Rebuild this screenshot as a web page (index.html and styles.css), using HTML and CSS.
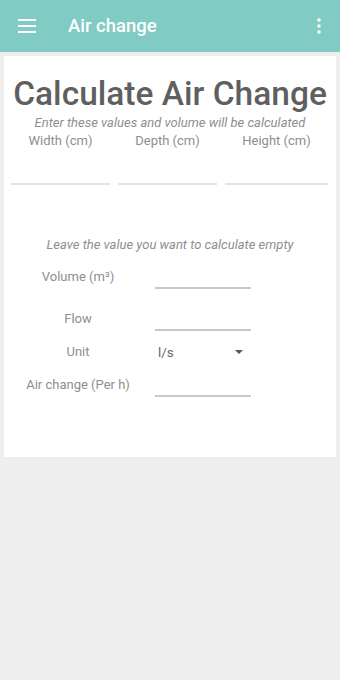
FILE: index.html
```html
<!DOCTYPE html>
<html lang="en">
<head>
  <meta charset="UTF-8">
  <meta name="viewport" content="width=device-width, initial-scale=1.0">
  <title>Air change</title>
  <link rel="stylesheet" href="styles.css">
</head>
<body>
  <header class="appbar">
    <svg class="menu-icon" width="18" height="14" viewBox="0 0 18 14">
      <rect x="0" y="0" width="18" height="2" fill="#fff"/>
      <rect x="0" y="6" width="18" height="2" fill="#fff"/>
      <rect x="0" y="12" width="18" height="2" fill="#fff"/>
    </svg>
    <div class="appbar-title">Air change</div>
    <svg class="more-icon" width="4" height="16" viewBox="0 0 4 16">
      <circle cx="2" cy="2" r="1.8" fill="#fff"/>
      <circle cx="2" cy="8" r="1.8" fill="#fff"/>
      <circle cx="2" cy="14" r="1.8" fill="#fff"/>
    </svg>
  </header>

  <main>
    <div class="card">
      <h1>Calculate Air Change</h1>
      <p class="hint">Enter these values and volume will be calculated</p>

      <div class="dims">
        <div class="dim">
          <label>Width (cm)</label>
          <input type="text">
        </div>
        <div class="dim">
          <label>Depth (cm)</label>
          <input type="text">
        </div>
        <div class="dim">
          <label>Height (cm)</label>
          <input type="text">
        </div>
      </div>

      <p class="hint note">Leave the value you want to calculate empty</p>

      <div class="rows">
        <div class="row first">
          <label>Volume (m³)</label>
          <input type="text">
        </div>
        <div class="row">
          <label>Flow</label>
          <input type="text">
        </div>
        <div class="row">
          <label>Unit</label>
          <div class="select">
            <span>l/s</span>
            <span class="arrow"></span>
          </div>
        </div>
        <div class="row">
          <label>Air change (Per h)</label>
          <input type="text">
        </div>
      </div>
    </div>
  </main>
</body>
</html>
```

FILE: styles.css
```css
html, body {
  margin: 0;
  padding: 0;
  font-family: Roboto, "Noto Sans", sans-serif;
  background-color: #eeeeee;
  color: #757575;
}

.appbar {
  height: 52px;
  background-color: #80cbc4;
  display: flex;
  align-items: center;
  padding: 0 18px;
  box-sizing: border-box;
}

.menu-icon {
  flex: none;
}

.appbar-title {
  flex: 1;
  margin-left: 32px;
  color: #fff;
  font-size: 18.5px;
  font-weight: 500;
}

.more-icon {
  margin-right: 1px;
}

main {
  padding: 4px;
}

.card {
  background-color: #fff;
  height: 401px;
  box-sizing: border-box;
  padding-top: 18px;
}

h1 {
  margin: 0;
  text-align: center;
  font-size: 33.5px;
  font-weight: 500;
  color: #5f5f5f;
  line-height: 40px;
}

.hint {
  margin: 1px 0 0;
  text-align: center;
  font-size: 13px;
  line-height: 16px;
  font-style: italic;
  color: #8e8e8e;
}

.dims {
  display: grid;
  grid-template-columns: 99px 99px 1fr;
  gap: 8px;
  padding: 0 8px 0 7px;
  margin-top: 2px;
}

.dim {
  display: flex;
  flex-direction: column;
  align-items: center;
}

.dim label {
  font-size: 13px;
  color: #8e8e8e;
  line-height: 16px;
}

.dim input {
  width: 100%;
  margin-top: 20px;
  height: 14px;
  border: none;
  border-bottom: 2px solid #e3e3e3;
  outline: none;
  padding: 0;
}

.note {
  margin-top: 52px;
}

.rows {
  margin-top: 7px;
}

.row {
  display: flex;
  align-items: center;
  height: 33px;
}

.row.first {
  margin-bottom: 9px;
}

.row label {
  width: 148px;
  text-align: center;
  font-size: 13px;
  color: #8e8e8e;
}

.row input {
  width: 96px;
  height: 22px;
  margin-left: 3px;
  border: none;
  border-bottom: 2px solid #c8c8c8;
  outline: none;
  padding: 0;
}

.select {
  width: 85px;
  margin-left: 3px;
  display: flex;
  align-items: center;
  justify-content: space-between;
  padding-left: 3px;
  font-size: 13.5px;
  color: #666;
}

.arrow {
  width: 0;
  height: 0;
  border-left: 4px solid transparent;
  border-right: 4px solid transparent;
  border-top: 4px solid #555;
}
```
